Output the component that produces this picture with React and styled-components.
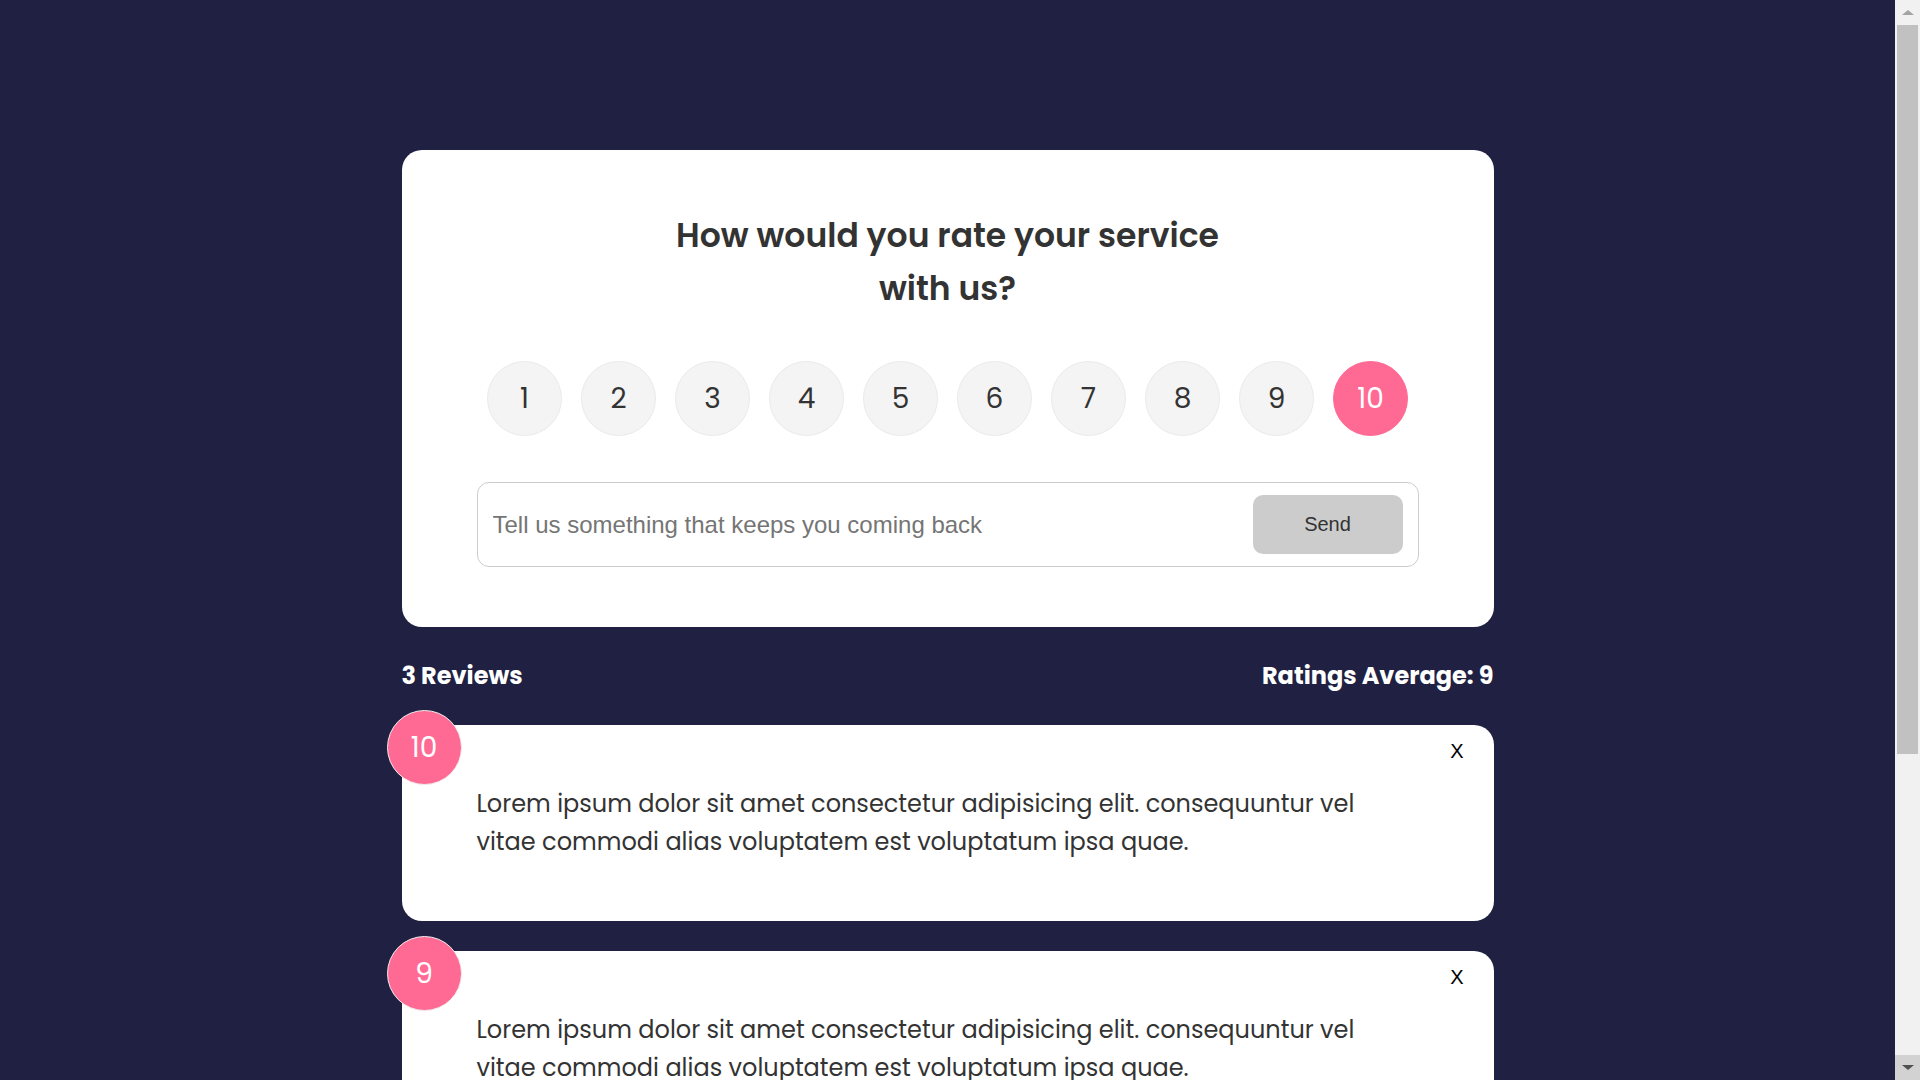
import styled, { createGlobalStyle } from "styled-components";

const reviews = [
  {
    id: 1,
    rating: 10,
    text: "Lorem ipsum dolor sit amet consectetur adipisicing elit. consequuntur vel vitae commodi alias voluptatem est voluptatum ipsa quae.",
  },
  {
    id: 2,
    rating: 9,
    text: "Lorem ipsum dolor sit amet consectetur adipisicing elit. consequuntur vel vitae commodi alias voluptatem est voluptatum ipsa quae.",
  },
  {
    id: 3,
    rating: 8,
    text: "Lorem ipsum dolor sit amet consectetur adipisicing elit. consequuntur vel vitae commodi alias voluptatem est voluptatum ipsa quae.",
  },
];

const selected = 10;

function App() {
  const average = Math.round(
    reviews.reduce((sum, r) => sum + r.rating, 0) / reviews.length
  );

  return (
    <>
      <GlobalStyle />
      <Page>
        <Container>
          <FormCard>
            <Heading>How would you rate your service with us?</Heading>
            <RatingList>
              {Array.from({ length: 10 }, (_, i) => i + 1).map((n) => (
                <RatingItem key={n} $active={n === selected}>
                  {n}
                </RatingItem>
              ))}
            </RatingList>
            <InputGroup>
              <TextInput placeholder="Tell us something that keeps you coming back" />
              <SendButton>Send</SendButton>
            </InputGroup>
          </FormCard>

          <Stats>
            <h4>{reviews.length} Reviews</h4>
            <h4>Ratings Average: {average}</h4>
          </Stats>

          <ReviewList>
            {reviews.map((r) => (
              <ReviewCard key={r.id}>
                <Badge>{r.rating}</Badge>
                <CloseButton>X</CloseButton>
                <ReviewText>{r.text}</ReviewText>
              </ReviewCard>
            ))}
          </ReviewList>
        </Container>
      </Page>

      {/* page scrollbar as it shows in the window */}
      <Scrollbar aria-hidden="true">
        <ScrollButton>
          <Arrow />
        </ScrollButton>
        <ScrollTrack>
          <ScrollThumb />
        </ScrollTrack>
        <ScrollButton $down>
          <Arrow $down />
        </ScrollButton>
      </Scrollbar>
    </>
  );
}

const GlobalStyle = createGlobalStyle`
  * {
    box-sizing: border-box;
  }

  body {
    margin: 0;
    background-color: #202142;
    font-family: "Poppins", "Inter", sans-serif;
  }
`;

const Page = styled.div`
  padding-right: 25px;
  padding-bottom: 60px;
`;

const Container = styled.div`
  max-width: 1092px;
  margin: 150px auto 0;
`;

const FormCard = styled.div`
  background-color: #fff;
  border-radius: 20px;
  padding: 59px 75px 60px;
`;

const Heading = styled.h2`
  max-width: 580px;
  margin: 0 auto;
  text-align: center;
  font-size: 33px;
  font-weight: 600;
  line-height: 53px;
  color: #333;
`;

const RatingList = styled.ul`
  display: flex;
  justify-content: center;
  gap: 19px;
  list-style: none;
  padding: 0;
  margin: 46px 0 46px;
`;

const RatingItem = styled.li`
  width: 75px;
  height: 75px;
  border-radius: 50%;
  border: 1px solid ${(p) => (p.$active ? "#ff6a95" : "#eaeaea")};
  background-color: ${(p) => (p.$active ? "#ff6a95" : "#f4f4f4")};
  color: ${(p) => (p.$active ? "#fff" : "#333")};
  display: flex;
  align-items: center;
  justify-content: center;
  font-size: 28px;
  cursor: pointer;
`;

const InputGroup = styled.div`
  display: flex;
  align-items: center;
  height: 85px;
  border: 1px solid #ccc;
  border-radius: 12px;
  padding: 0 15px;
`;

const TextInput = styled.input`
  flex: 1;
  padding: 0;
  border: none;
  outline: none;
  font-family: "Liberation Sans", Arial, sans-serif;
  font-size: 24px;
  color: #333;

  &::placeholder {
    color: #757575;
  }
`;

const SendButton = styled.button`
  width: 150px;
  height: 59px;
  border: none;
  border-radius: 10px;
  background-color: #ccc;
  color: #333;
  font-family: "Liberation Sans", Arial, sans-serif;
  font-size: 20px;
  cursor: pointer;
`;

const Stats = styled.div`
  display: flex;
  justify-content: space-between;
  align-items: center;
  margin: 31px 0 31px;

  h4 {
    margin: 0;
    color: #fff;
    font-size: 24px;
    font-weight: 700;
    line-height: 36px;
  }
`;

const ReviewList = styled.div`
  display: flex;
  flex-direction: column;
  gap: 30px;
`;

const ReviewCard = styled.div`
  position: relative;
  background-color: #fff;
  border-radius: 20px;
  padding: 60px 130px 60px 75px;
`;

const Badge = styled.div`
  position: absolute;
  top: -15px;
  left: -15px;
  width: 75px;
  height: 75px;
  border-radius: 50%;
  border: 1px solid #eee;
  background-color: #ff6a95;
  color: #fff;
  display: flex;
  align-items: center;
  justify-content: center;
  font-size: 28px;
`;

const CloseButton = styled.button`
  position: absolute;
  top: 15px;
  right: 30px;
  padding: 0;
  border: none;
  background: none;
  font-family: "Liberation Sans", Arial, sans-serif;
  font-size: 20px;
  color: #000;
  cursor: pointer;
`;

const ReviewText = styled.p`
  margin: 0;
  font-size: 24px;
  line-height: 38px;
  color: #333;
`;

const Scrollbar = styled.aside`
  position: fixed;
  top: 0;
  right: 0;
  width: 25px;
  height: 100vh;
  display: flex;
  flex-direction: column;
  background-color: #f1f1f1;
  pointer-events: none;
`;

const ScrollButton = styled.div`
  height: 25px;
  flex-shrink: 0;
  display: flex;
  align-items: center;
  justify-content: center;
  background-color: ${(p) => (p.$down ? "#d2d2d2" : "#f1f1f1")};
`;

const Arrow = styled.span`
  width: 0;
  height: 0;
  border-left: 6px solid transparent;
  border-right: 6px solid transparent;
  ${(p) =>
    p.$down
      ? "border-top: 5px solid #505050;"
      : "border-bottom: 5px solid #a3a3a3;"}
`;

const ScrollTrack = styled.div`
  flex: 1;
  padding: 0 2px;
`;

const ScrollThumb = styled.div`
  height: 729px;
  background-color: #c1c1c1;
`;

export default App;
